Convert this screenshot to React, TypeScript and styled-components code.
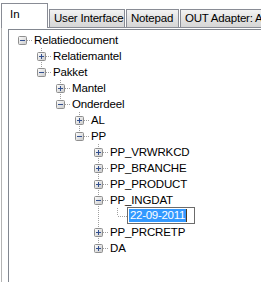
import React from "react";
import styled, { createGlobalStyle, css } from "styled-components";

interface TreeNode {
  label: string;
  open?: boolean;
  hasChildren?: boolean;
  editing?: boolean;
  children?: TreeNode[];
}

interface FlatRow {
  node: TreeNode;
  level: number;
  guides: boolean[];
  isRoot: boolean;
  isLast: boolean;
}

const TREE: TreeNode = {
  label: "Relatiedocument",
  open: true,
  children: [
    { label: "Relatiemantel", hasChildren: true },
    {
      label: "Pakket",
      open: true,
      children: [
        { label: "Mantel", hasChildren: true },
        {
          label: "Onderdeel",
          open: true,
          children: [
            { label: "AL", hasChildren: true },
            {
              label: "PP",
              open: true,
              children: [
                { label: "PP_VRWRKCD", hasChildren: true },
                { label: "PP_BRANCHE", hasChildren: true },
                { label: "PP_PRODUCT", hasChildren: true },
                { label: "PP_INGDAT", open: true, children: [{ label: "22-09-2011", editing: true }] },
                { label: "PP_PRCRETP", hasChildren: true },
                { label: "DA", hasChildren: true },
              ],
            },
          ],
        },
      ],
    },
  ],
};

const TABS = ["In", "User Interface", "Notepad", "OUT Adapter: AR"];
const TAB_WIDTHS = [47, 76, 53, 100];

// guides[i] = ancestor at level i still has siblings below -> draw a vertical line there
function flatten(node: TreeNode, level: number, guides: boolean[], isLast: boolean, out: FlatRow[]) {
  out.push({ node, level, guides, isRoot: level === 0, isLast });
  if (node.open && node.children) {
    node.children.forEach((c, i) => {
      const last = i === node.children!.length - 1;
      flatten(c, level + 1, [...guides, !isLast], last, out);
    });
  }
}

const GlobalStyle = createGlobalStyle`
  body { margin: 0; background: #fff; font-family: "Liberation Sans", Arial, sans-serif; }
`;

const DOT = "#a0a0a0";
const vDots = `repeating-linear-gradient(to bottom, ${DOT} 0 1px, transparent 1px 2px)`;
const hDots = `repeating-linear-gradient(to right, ${DOT} 0 1px, transparent 1px 2px)`;

const Window = styled.div`
  width: 261px; height: 282px; overflow: hidden; background: #fff;
  display: flex; flex-direction: column;
`;

const TabStrip = styled.div`
  display: flex; align-items: flex-end; height: 27px; padding-left: 1px;
  flex: none;
`;

const Tab = styled.div<{ $active: boolean; $w: number }>`
  box-sizing: border-box; width: ${(p: { $w: number }) => p.$w}px; flex: none;
  border: 1px solid #898c95; border-bottom: none;
  font-size: 11.5px; color: #000; white-space: nowrap; overflow: hidden;
  display: flex;
  ${(p: { $active: boolean }) =>
    p.$active
      ? css`
          height: 25px; margin-bottom: -1px; background: #fff;
          position: relative; z-index: 1;
          padding: 4px 0 0 8px; align-items: flex-start; line-height: 12px;
        `
      : css`
          height: 18px; background: linear-gradient(#f3f3f3, #e3e3e3 50%, #d6d6d6);
          padding: 2px 0 0 4px; align-items: flex-start;
          line-height: 13px; letter-spacing: -0.2px;
          & + & { margin-left: 1px; }
        `}
`;

const TabPage = styled.div`
  flex: 1; border-top: 1px solid #898c95; border-left: 1px solid #b4b4b4;
  margin-left: 1px; padding: 1px 0 0 6px; display: flex;
`;

const TreeBox = styled.div`
  flex: 1; border: 1px solid #828790; border-right: none; border-bottom: none;
  padding: 2px 0 0 4px; background: #fff;
`;

const Row = styled.div`
  display: flex; height: 16px; align-items: stretch;
`;

const Guide = styled.span<{ $line: boolean }>`
  width: 19px; flex: none;
  background: ${(p: { $line: boolean }) => (p.$line ? `${vDots} 9px 0 / 1px 16px no-repeat` : "none")};
`;

const Connector = styled.span<{ $top: boolean; $bottom: boolean }>`
  width: 19px; flex: none; display: flex; align-items: center;
  background:
    ${(p: { $top: boolean }) => (p.$top ? `${vDots} 9px 0 / 1px 8px no-repeat,` : "")}
    ${(p: { $bottom: boolean }) => (p.$bottom ? `${vDots} 9px 8px / 1px 8px no-repeat,` : "")}
    ${hDots} 10px 8px / 9px 1px no-repeat;
`;

const ExpanderIcon = styled.svg`
  display: block; margin: 1px 0 0 5px;
`;

const Label = styled.span`
  font-size: 11.5px; line-height: 16px; color: #000; padding: 0 2px;
  white-space: nowrap; letter-spacing: -0.15px;
`;

const Editor = styled.span`
  box-sizing: border-box; align-self: center; height: 17px; width: 68px;
  border: 1px solid #6b6b6b; background: #fff; display: flex; align-items: center;
  padding-left: 1px; margin-top: -1px;
`;

const Selected = styled.span`
  font-size: 11.5px; line-height: 13px; background: #3399ff; color: #fff;
  padding: 0 1px; white-space: nowrap; letter-spacing: -0.3px;
`;

const Caret = styled.span`
  width: 1px; height: 13px; background: #4a3a20; flex: none;
`;

function Expander({ open }: { open: boolean }) {
  return (
    <ExpanderIcon width="9" height="9" viewBox="0 0 9 9">
      <defs>
        <linearGradient id="expFill" x1="0" y1="0" x2="1" y2="1">
          <stop offset="0" stopColor="#ffffff" />
          <stop offset="1" stopColor="#c8c8c8" />
        </linearGradient>
      </defs>
      <rect x="0.5" y="0.5" width="8" height="8" rx="1" fill="url(#expFill)" stroke="#8f8f8f" />
      <path d="M2 4.5h5" stroke="#33508f" strokeWidth="1" />
      {!open && <path d="M4.5 2v5" stroke="#33508f" strokeWidth="1" />}
    </ExpanderIcon>
  );
}

export default function App() {
  const rows: FlatRow[] = [];
  flatten(TREE, 0, [], true, rows);

  return (
    <>
      <GlobalStyle />
      <Window>
        <TabStrip>
          {TABS.map((t, i) => (
            <Tab key={t} $active={i === 0} $w={TAB_WIDTHS[i]}>
              {t}
            </Tab>
          ))}
        </TabStrip>
        <TabPage>
          <TreeBox>
            {rows.map((r, i) => {
              const expandable = !!(r.node.open || r.node.hasChildren);
              return (
                <Row key={i}>
                  {r.guides.map((g, j) => (
                    <Guide key={j} $line={g} />
                  ))}
                  <Connector $top={!r.isRoot} $bottom={!r.isRoot && !r.isLast}>
                    {expandable && <Expander open={!!r.node.open} />}
                  </Connector>
                  {r.node.editing ? (
                    <Editor>
                      <Selected>{r.node.label}</Selected>
                      <Caret />
                    </Editor>
                  ) : (
                    <Label>{r.node.label}</Label>
                  )}
                </Row>
              );
            })}
          </TreeBox>
        </TabPage>
      </Window>
    </>
  );
}
